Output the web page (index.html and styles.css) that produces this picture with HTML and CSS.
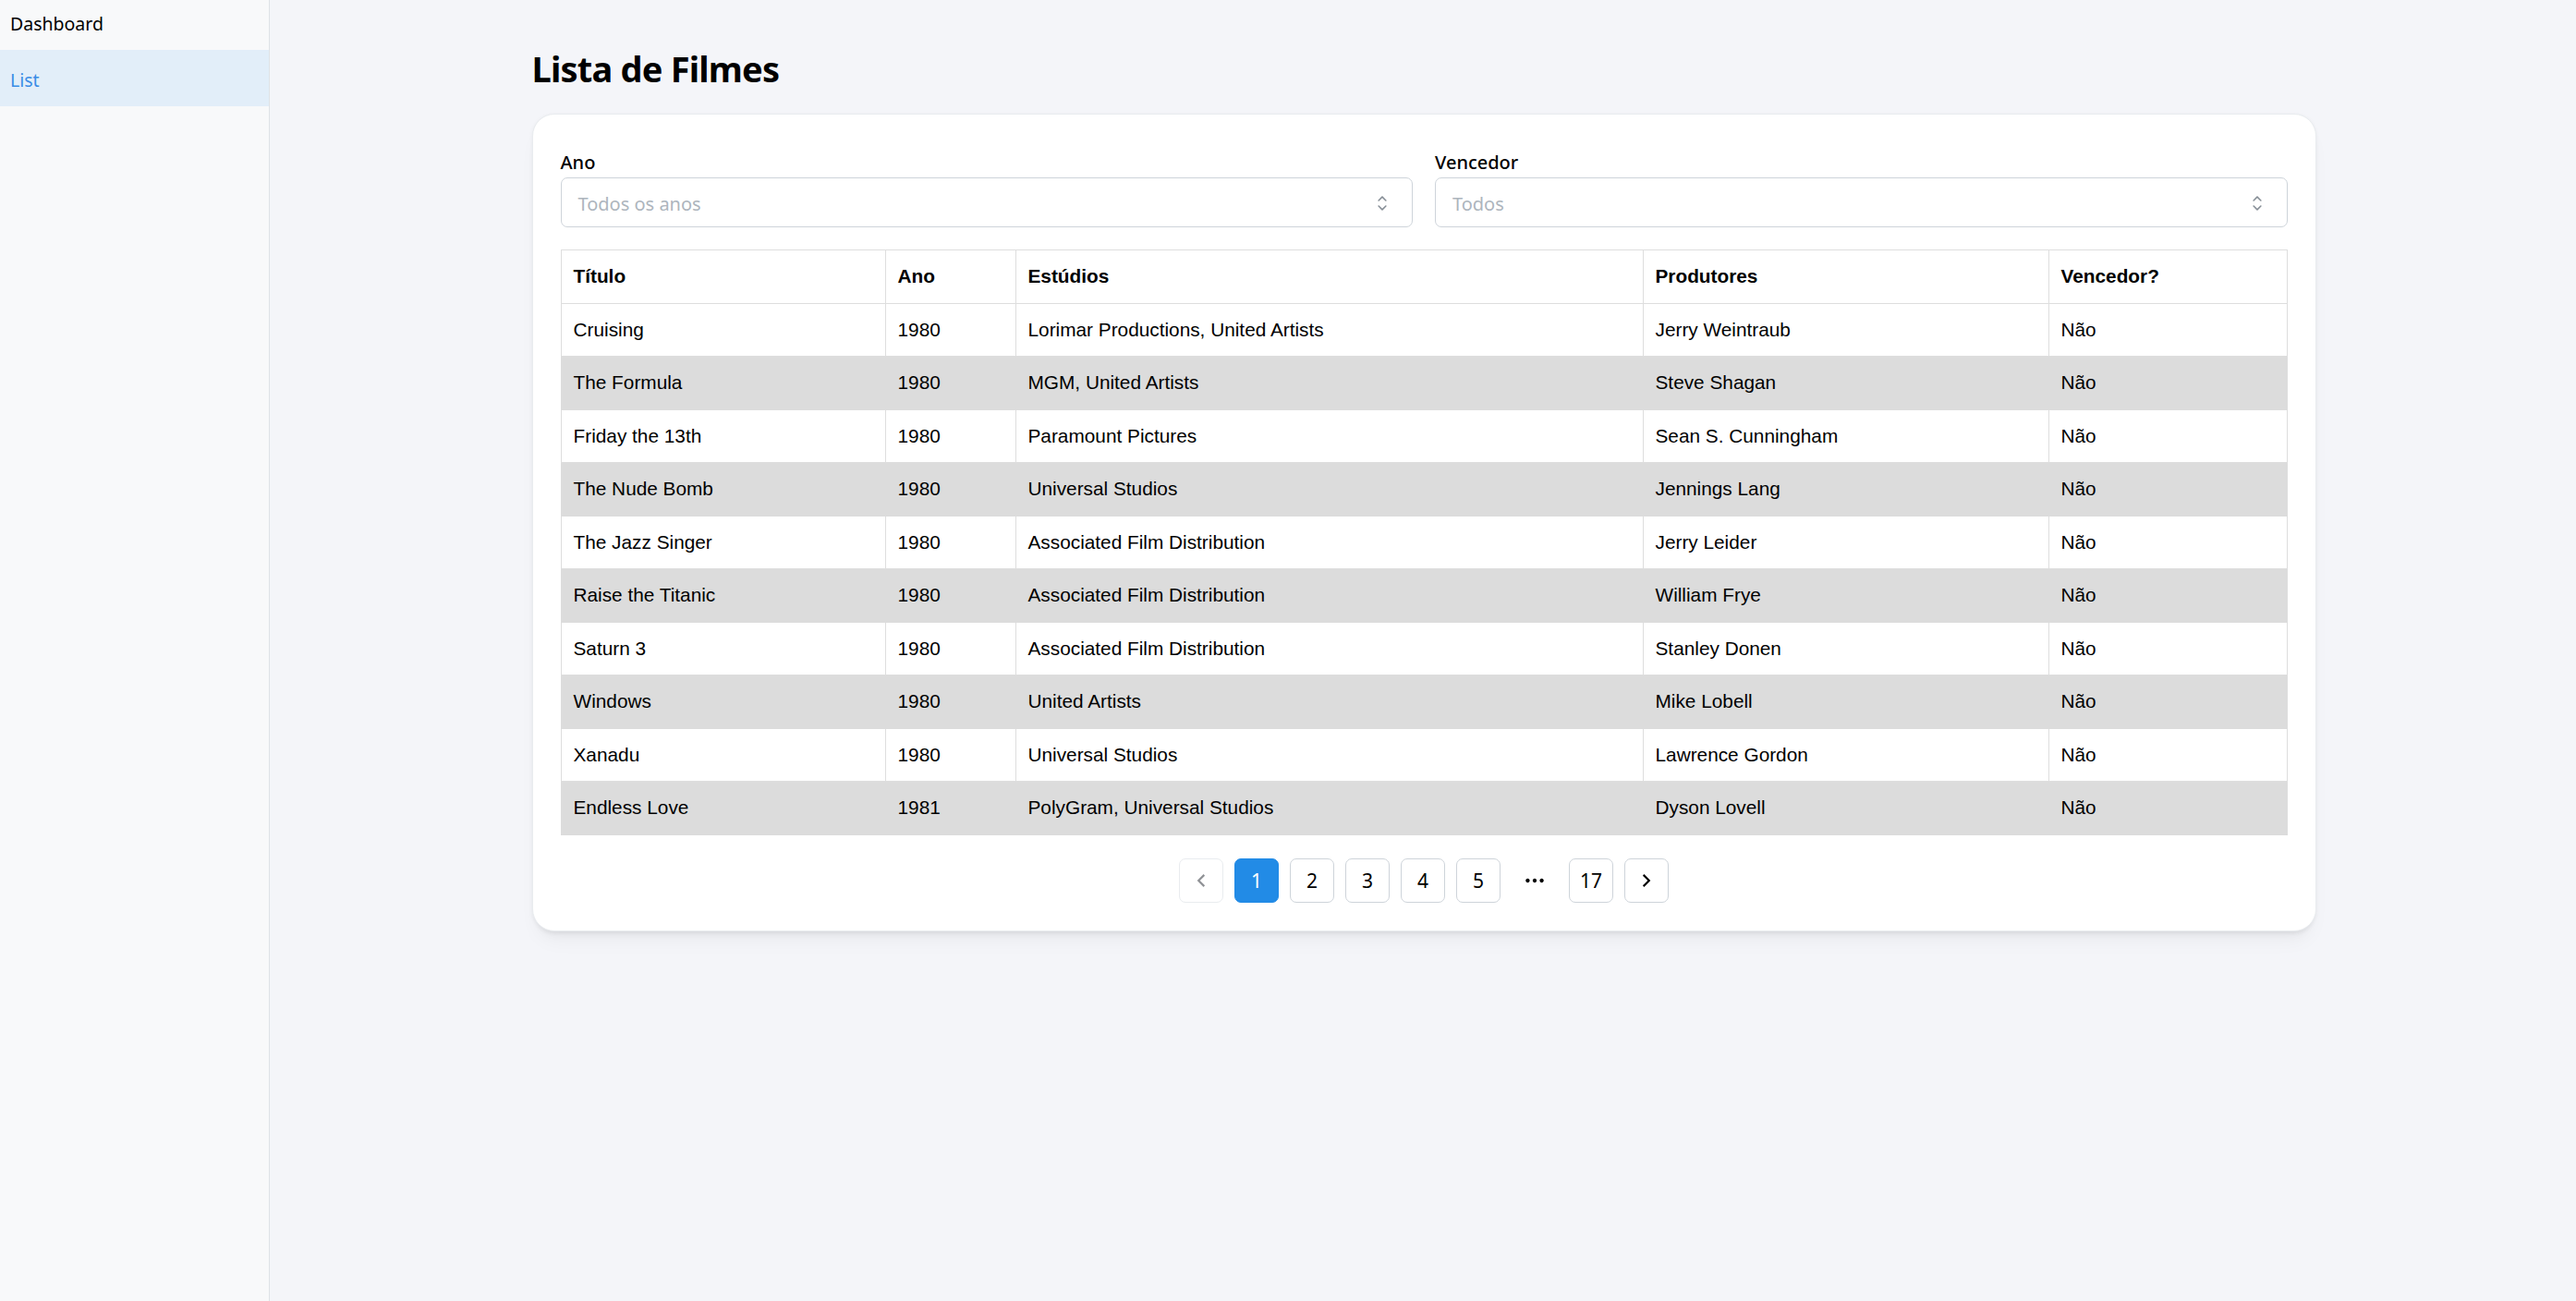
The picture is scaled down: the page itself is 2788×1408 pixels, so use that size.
FILE: index.html
```html
<!DOCTYPE html>
<html lang="pt-BR">
<head>
<meta charset="utf-8">
<title>Lista de Filmes</title>
<link rel="stylesheet" href="styles.css">
</head>
<body>
<div class="shell">
  <nav class="navbar">
    <a class="navlink">Dashboard</a>
    <a class="navlink navlink-active">List</a>
  </nav>
  <main class="main">
    <div class="container">
      <h2 class="title">Lista de Filmes</h2>
      <section class="card">
        <div class="filters">
          <div class="field">
            <label class="field-label">Ano</label>
            <div class="select">
              <span class="placeholder">Todos os anos</span>
              <svg class="select-chevron" viewBox="0 0 15 15" fill="none"><path d="M4.93179 5.43179C4.75605 5.60753 4.75605 5.89245 4.93179 6.06819C5.10753 6.24392 5.39245 6.24392 5.56819 6.06819L7.49999 4.13638L9.43179 6.06819C9.60753 6.24392 9.89245 6.24392 10.0682 6.06819C10.2439 5.89245 10.2439 5.60753 10.0682 5.43179L7.81819 3.18179C7.73379 3.0974 7.61933 3.04999 7.49999 3.04999C7.38064 3.04999 7.26618 3.0974 7.18179 3.18179L4.93179 5.43179ZM10.0682 9.56819C10.2439 9.39245 10.2439 9.10753 10.0682 8.93179C9.89245 8.75606 9.60753 8.75606 9.43179 8.93179L7.49999 10.8636L5.56819 8.93179C5.39245 8.75606 5.10753 8.75606 4.93179 8.93179C4.75605 9.10753 4.75605 9.39245 4.93179 9.56819L7.18179 11.8182C7.26618 11.9026 7.38064 11.95 7.49999 11.95C7.61933 11.95 7.73379 11.9026 7.81819 11.8182L10.0682 9.56819Z" fill="currentColor" fill-rule="evenodd" clip-rule="evenodd"/></svg>
            </div>
          </div>
          <div class="field">
            <label class="field-label">Vencedor</label>
            <div class="select">
              <span class="placeholder">Todos</span>
              <svg class="select-chevron" viewBox="0 0 15 15" fill="none"><path d="M4.93179 5.43179C4.75605 5.60753 4.75605 5.89245 4.93179 6.06819C5.10753 6.24392 5.39245 6.24392 5.56819 6.06819L7.49999 4.13638L9.43179 6.06819C9.60753 6.24392 9.89245 6.24392 10.0682 6.06819C10.2439 5.89245 10.2439 5.60753 10.0682 5.43179L7.81819 3.18179C7.73379 3.0974 7.61933 3.04999 7.49999 3.04999C7.38064 3.04999 7.26618 3.0974 7.18179 3.18179L4.93179 5.43179ZM10.0682 9.56819C10.2439 9.39245 10.2439 9.10753 10.0682 8.93179C9.89245 8.75606 9.60753 8.75606 9.43179 8.93179L7.49999 10.8636L5.56819 8.93179C5.39245 8.75606 5.10753 8.75606 4.93179 8.93179C4.75605 9.10753 4.75605 9.39245 4.93179 9.56819L7.18179 11.8182C7.26618 11.9026 7.38064 11.95 7.49999 11.95C7.61933 11.95 7.73379 11.9026 7.81819 11.8182L10.0682 9.56819Z" fill="currentColor" fill-rule="evenodd" clip-rule="evenodd"/></svg>
            </div>
          </div>
        </div>

        <table class="movies">
          <colgroup>
            <col class="col-title">
            <col class="col-year">
            <col class="col-studios">
            <col class="col-producers">
            <col class="col-winner">
          </colgroup>
          <thead>
            <tr><th>Título</th><th>Ano</th><th>Estúdios</th><th>Produtores</th><th>Vencedor?</th></tr>
          </thead>
          <tbody>
            <tr><td>Cruising</td><td>1980</td><td>Lorimar Productions, United Artists</td><td>Jerry Weintraub</td><td>Não</td></tr>
            <tr><td>The Formula</td><td>1980</td><td>MGM, United Artists</td><td>Steve Shagan</td><td>Não</td></tr>
            <tr><td>Friday the 13th</td><td>1980</td><td>Paramount Pictures</td><td>Sean S. Cunningham</td><td>Não</td></tr>
            <tr><td>The Nude Bomb</td><td>1980</td><td>Universal Studios</td><td>Jennings Lang</td><td>Não</td></tr>
            <tr><td>The Jazz Singer</td><td>1980</td><td>Associated Film Distribution</td><td>Jerry Leider</td><td>Não</td></tr>
            <tr><td>Raise the Titanic</td><td>1980</td><td>Associated Film Distribution</td><td>William Frye</td><td>Não</td></tr>
            <tr><td>Saturn 3</td><td>1980</td><td>Associated Film Distribution</td><td>Stanley Donen</td><td>Não</td></tr>
            <tr><td>Windows</td><td>1980</td><td>United Artists</td><td>Mike Lobell</td><td>Não</td></tr>
            <tr><td>Xanadu</td><td>1980</td><td>Universal Studios</td><td>Lawrence Gordon</td><td>Não</td></tr>
            <tr><td>Endless Love</td><td>1981</td><td>PolyGram, Universal Studios</td><td>Dyson Lovell</td><td>Não</td></tr>
          </tbody>
        </table>

        <div class="pagination">
          <button class="page page-disabled" aria-label="Anterior">
            <svg class="page-icon" viewBox="0 0 16 16" fill="none"><path d="M7.219 8l3.3 3.3-.943.943L5.333 8l4.243-4.243.943.943-3.3 3.3z" fill="currentColor"/></svg>
          </button>
          <button class="page page-active">1</button>
          <button class="page">2</button>
          <button class="page">3</button>
          <button class="page">4</button>
          <button class="page">5</button>
          <span class="page-dots">
            <svg class="page-icon" viewBox="0 0 16 16" fill="none"><path d="M2 8c0-.733.6-1.333 1.333-1.333.734 0 1.334.6 1.334 1.333s-.6 1.333-1.334 1.333C2.6 9.333 2 8.733 2 8zm9.333 0c0-.733.6-1.333 1.334-1.333C13.4 6.667 14 7.267 14 8s-.6 1.333-1.333 1.333c-.734 0-1.334-.6-1.334-1.333zM6.667 8c0-.733.6-1.333 1.333-1.333s1.333.6 1.333 1.333S8.733 9.333 8 9.333 6.667 8.733 6.667 8z" fill="currentColor"/></svg>
          </span>
          <button class="page">17</button>
          <button class="page" aria-label="Próxima">
            <svg class="page-icon" viewBox="0 0 16 16" fill="none"><path d="M8.781 8l-3.3-3.3.943-.943L10.667 8l-4.243 4.243-.943-.943 3.3-3.3z" fill="currentColor"/></svg>
          </button>
        </div>
      </section>
    </div>
  </main>
</div>
</body>
</html>
```

FILE: styles.css
```css
* { box-sizing: border-box; }

html, body {
  margin: 0;
  padding: 0;
}

body {
  font-family: "Noto Sans", "Open Sans", sans-serif;
  color: #000;
  background: #f4f5f9;
}

.shell {
  display: flex;
  min-height: 100vh;
}

.navbar {
  width: 292px;
  flex: 0 0 292px;
  background: #f8f9fa;
  border-right: 1px solid #dee2e6;
  display: flex;
  flex-direction: column;
}

.navlink {
  display: flex;
  align-items: center;
  height: 54px;
  padding: 0 11px 3px;
  font-size: 19.5px;
  color: #000;
  text-decoration: none;
}

.navlink-active {
  height: 61px;
  padding: 3px 11px 0;
  background: #e2eef9;
  color: #3a8de6;
}

.main {
  flex: 1;
  padding-top: 49px;
  padding-left: 2px;
}

.container {
  width: 1931px;
  margin: 0 auto;
}

.title {
  margin: 0 0 24px;
  font-size: 38px;
  letter-spacing: -0.8px;
  line-height: 50px;
  font-weight: 700;
}

.card {
  background: #fff;
  border: 1px solid #e9ecef;
  border-radius: 24px;
  padding: 36px 30px 30px;
  box-shadow: 0 1.5px 4.5px rgba(0,0,0,.05), 0 15px 22px -7px rgba(0,0,0,.05), 0 10px 10px -7px rgba(0,0,0,.04);
}

.filters {
  display: grid;
  grid-template-columns: 1fr 1fr;
  gap: 24px;
}

.field {
  display: flex;
  flex-direction: column;
}

.field-label {
  font-size: 20px;
  font-weight: 500;
  line-height: 31px;
  margin-bottom: 1px;
}

.select {
  height: 54px;
  border: 1px solid #ced4da;
  border-radius: 7px;
  display: flex;
  align-items: center;
  justify-content: space-between;
  padding: 2px 19px 0 18px;
}

.placeholder {
  font-size: 20px;
  color: #adb5bd;
}

.select-chevron {
  width: 26px;
  height: 26px;
  color: #868e96;
}

.movies {
  width: 100%;
  margin-top: 24px;
  border-collapse: collapse;
  table-layout: fixed;
  font-family: "Liberation Sans", Arial, sans-serif;
  font-size: 20.8px;
}

.col-title { width: 351px; }
.col-year { width: 141px; }
.col-studios { width: 679px; }
.col-producers { width: 439px; }

.movies th,
.movies td {
  border: 1px solid #dedede;
  padding: 17px 13px;
  line-height: 22.5px;
  text-align: left;
  white-space: nowrap;
}

.movies th {
  font-weight: 700;
}

.movies tbody tr:nth-child(even) td {
  background: #dcdcdc;
  border-color: #dcdcdc;
}

.pagination {
  margin-top: 25px;
  display: flex;
  justify-content: center;
  gap: 12px;
}

.page {
  width: 48px;
  height: 48px;
  border: 1px solid #ced4da;
  border-radius: 7px;
  background: #fff;
  color: #000;
  font-family: "Noto Sans", "Open Sans", sans-serif;
  font-size: 21px;
  display: flex;
  align-items: center;
  justify-content: center;
  padding: 0;
}

.page-active {
  background: #228be6;
  border-color: #228be6;
  color: #fff;
}

.page-disabled {
  border-color: #e9ecef;
  color: #909296;
}

.page-dots {
  width: 50px;
  height: 48px;
  display: flex;
  align-items: center;
  justify-content: center;
}

.page-icon {
  width: 26px;
  height: 26px;
}
```
